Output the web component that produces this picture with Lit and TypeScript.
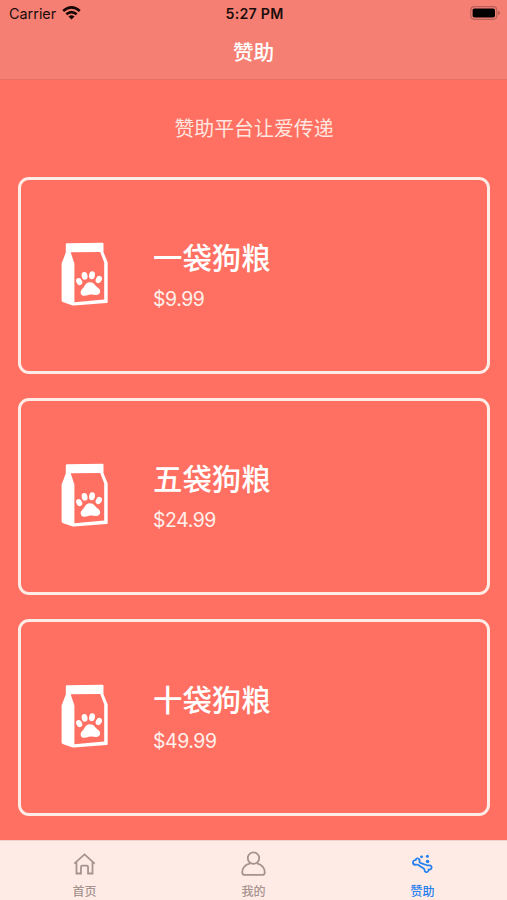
import { LitElement, html, css, svg } from "lit";
import { customElement } from "lit/decorators.js";

const home = svg`<path d="M2.2 12.2 12 3.2l9.8 9M4.3 10.6V21.6h4.3v-6.2q0-1.3 1.3-1.3h4.2q1.3 0 1.3 1.3v6.2h4.3V10.6"/>`;
const user = svg`<circle cx="12" cy="6.9" r="5.5"/><path d="M8.7 11.8C3.6 13.2 1.2 16.4 1.2 20.6q0 2.4 2.6 2.4h16.4q2.6 0 2.6-2.4c0-4.2-2.4-7.4-7.5-8.8"/>`;
const bone = svg`<path d="M9 10.3C10.2 7.2 6.3 5.6 5.4 8.8 2.3 8.5 2 12.9 4.9 13.2c1.1.1 1.7-.5 2.7.1l5.6 3.6c1 .6.6 1.5 1.1 2.5 1.1 1.7 4.1.8 3.6-1.6 3 .5 4-3.3 1.2-4-1.3-.3-1.9.4-2.9-.1L9.9 11.4C9.3 11.1 9 10.8 9 10.3Z"/><g class="solid"><circle cx="11.1" cy="5.6" r="1.4"/><circle cx="16.7" cy="5" r="1.5"/><circle cx="16.9" cy="10" r="1.7"/></g>`;

const plans = [
  { name: "一袋狗粮", price: "$9.99" },
  { name: "五袋狗粮", price: "$24.99" },
  { name: "十袋狗粮", price: "$49.99" },
];

const tabs = [
  { label: "首页", icon: home, active: false },
  { label: "我的", icon: user, active: false },
  { label: "赞助", icon: bone, active: true },
];

@customElement("app-root")
export class AppRoot extends LitElement {
  static styles = css`
    :host {
      display: flex;
      flex-direction: column;
      height: 900px;
      overflow: hidden;
      background: #ff7062;
      color: #fff;
      font-family: Inter, "Noto Sans CJK SC", sans-serif;
    }
    .header {
      box-sizing: border-box;
      height: 80px;
      background: #f67f73;
      border-bottom: 1px solid #e67065;
    }
    .status {
      display: grid;
      grid-template-columns: 1fr auto 1fr;
      align-items: center;
      height: 27px;
      padding: 0 7px 0 9px;
      color: #1b0d0c;
      font-size: 14.4px;
      line-height: 27px;
    }
    .carrier {
      display: flex;
      align-items: center;
      gap: 6px;
    }
    .carrier svg {
      margin-top: -2px;
    }
    .time {
      font-weight: 600;
      font-size: 14.2px;
      letter-spacing: 0.25px;
    }
    .battery {
      justify-self: end;
      margin-top: -1px;
    }
    .title {
      text-align: center;
      font-size: 20.6px;
      font-weight: 500;
      line-height: 30px;
      margin-top: 11px;
    }
    .content {
      flex: 1;
      padding: 0 17px 0 18px;
    }
    .intro {
      text-align: center;
      font-size: 19.9px;
      line-height: 30px;
      padding: 34px 0 33px;
      color: #ffe5df;
      font-weight: 400;
    }
    .cards {
      display: flex;
      flex-direction: column;
      gap: 24px;
    }
    .card {
      box-sizing: border-box;
      height: 197px;
      border: 3px solid #ffece7;
      border-radius: 11px;
      display: flex;
      align-items: center;
      padding-left: 39px;
    }
    .bag {
      margin-right: 45px;
      margin-top: -3px;
    }
    .name {
      font-size: 29.4px;
      font-weight: 500;
      line-height: 40px;
    }
    .price {
      font-size: 19.4px;
      letter-spacing: -0.4px;
      line-height: 26px;
      margin-top: 7px;
      padding-bottom: 1px;
      color: #fff0ec;
    }
    .tabs {
      box-sizing: border-box;
      display: grid;
      grid-template-columns: repeat(3, 1fr);
      height: 60px;
      background: #ffebe5;
      border-top: 1px solid #f5d3cc;
    }
    .tab {
      display: flex;
      flex-direction: column;
      align-items: center;
      padding-top: 10px;
      color: #a5938f;
      font-size: 12px;
      font-weight: 500;
      line-height: 16px;
    }
    .tab svg {
      fill: none;
      stroke: currentColor;
      stroke-width: 1.7;
      margin-bottom: 8px;
    }
    .tab .solid {
      fill: currentColor;
      stroke: none;
    }
    .tab.active {
      color: #2580f0;
    }
  `;

  render() {
    return html`
      <header class="header">
        <div class="status">
          <span class="carrier">Carrier
            <svg width="19" height="14" viewBox="0 0 19 14" fill="none" stroke="#160605" stroke-width="2.6">
              <path d="M1.2 5.1Q9.5-2.2 17.8 5.1M4.3 8.3Q9.5 3.8 14.7 8.3" />
              <path d="M9.5 13.5 6.5 10.4Q9.5 8 12.5 10.4Z" fill="#160605" stroke="none" />
            </svg>
          </span>
          <span class="time">5:27 PM</span>
          <svg class="battery" width="30" height="14" viewBox="0 0 30 14">
            <rect x="0.8" y="0.7" width="26" height="12.6" rx="3.5" fill="none" stroke="#b9605a" stroke-width="1.2" />
            <rect x="2.6" y="2.5" width="22.4" height="9" rx="1.8" fill="#000" />
            <path d="M28 4.7q2 .6 2 2.3t-2 2.3Z" fill="#b9605a" />
          </svg>
        </div>
        <div class="title">赞助</div>
      </header>
      <main class="content">
        <div class="intro">赞助平台让爱传递</div>
        <div class="cards">
          ${plans.map(
            (p) => html`<section class="card">
              <svg class="bag" width="48" height="64" viewBox="0 0 48 64" fill="#fff">
                <path fill-rule="evenodd" d="M6.8 1.2 42.4.8Q43.5.8 43.5 2v8.2l4.2 10.3v39.2q0 1.2-1.2 1.3L14 63.6Q13 63.6 12 63.3L2.6 59.9Q1.6 59.6 1.6 58.6V21.6L5.8 10.6V2.2Q5.8 1.2 6.8 1.2ZM10.7 10.3 14.4 21.6v38.6l29.8-2.6V20.6L40.2 9.9Z" />
                <ellipse cx="19.2" cy="39.6" rx="2.8" ry="3.7" transform="rotate(-28 19.2 39.6)" />
                <ellipse cx="24.6" cy="33.8" rx="2.9" ry="3.9" transform="rotate(-12 24.6 33.8)" />
                <ellipse cx="32" cy="33.2" rx="2.9" ry="4" transform="rotate(10 32 33.2)" />
                <ellipse cx="38.8" cy="37.5" rx="2.9" ry="3.8" transform="rotate(28 38.8 37.5)" />
                <path d="M29.6 40.2c4.6-.2 5.3 3.5 8.4 5.6 3.5 2.4 2.6 6.8-1.2 7.1-2.4.2-4-.6-6.3-.4s-3.7 1.2-6.1 1.3c-3.8.1-5-4.3-2.2-6.9 2.7-2.5 3.2-6.5 7.4-6.7Z" />
              </svg>
              <div>
                <div class="name">${p.name}</div>
                <div class="price">${p.price}</div>
              </div>
            </section>`
          )}
        </div>
      </main>
      <nav class="tabs">
        ${tabs.map(
          (t) => html`<div class="tab ${t.active ? "active" : ""}">
            <svg width="25" height="25" viewBox="0 0 24 24">${t.icon}</svg>
            <span>${t.label}</span>
          </div>`
        )}
      </nav>
    `;
  }
}
